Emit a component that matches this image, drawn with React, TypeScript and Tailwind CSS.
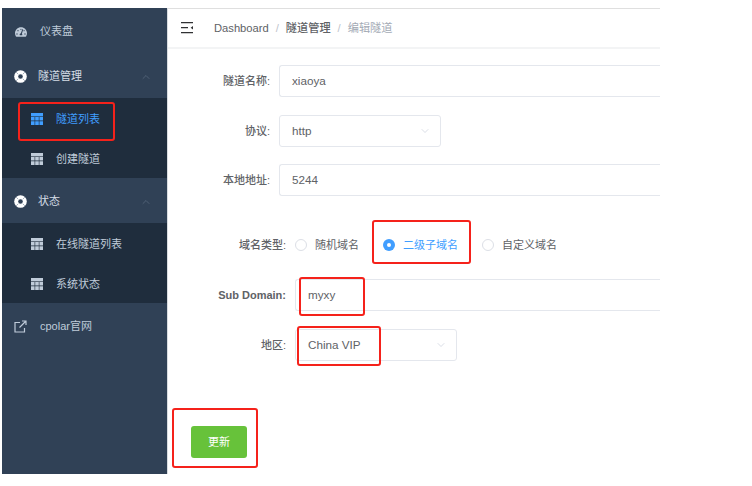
import React from 'react';
import { ChevronDown, ChevronUp } from 'lucide-react';
import { FaTachometerAlt } from 'react-icons/fa';

const FONT = "font-['Liberation_Sans','Noto_Sans_CJK_SC',sans-serif]";

function RingIcon() {
  return (
    <svg width="13" height="13" viewBox="0 0 13 13" className="shrink-0">
      <circle cx="6.5" cy="6.5" r="6.3" fill="#ffffff" />
      <circle cx="6.5" cy="6.5" r="2.3" fill="#304156" />
      <path d="M2.2 2.2l2 2M10.8 2.2l-2 2M2.2 10.8l2-2M10.8 10.8l-2-2" stroke="#9aa6b4" strokeWidth="0.9" />
    </svg>
  );
}

function OutIcon() {
  return (
    <svg width="13" height="13" viewBox="0 0 13 13" fill="none" stroke="#bfcbd9" strokeWidth="1.2" className="shrink-0">
      <path d="M6 2.5H1v9.5h9.5V8" />
      <path d="M5.5 7.5L11.5 1.5M8 1h4v4" />
    </svg>
  );
}

function TableIcon() {
  return (
    <svg width="12" height="12" viewBox="0 0 12 12" fill="currentColor" className="shrink-0">
      <path d="M0 0h12v3.4H0z" />
      <path d="M0 4h3.6v3.6H0zM4.2 4h3.6v3.6H4.2zM8.4 4H12v3.6H8.4zM0 8.2h3.6V12H0zM4.2 8.2h3.6V12H4.2zM8.4 8.2H12V12H8.4z" />
    </svg>
  );
}

function MenuHead({ icon, label, open, bold }: { icon: React.ReactNode; label: string; open?: boolean; bold?: boolean }) {
  return (
    <div className="h-[45px] flex items-center pt-[2px] pl-[12px] pr-[15px] text-[11px] text-[#bfcbd9]">
      <span className="w-[13px] flex justify-center">{icon}</span>
      <span className={bold ? 'ml-[11px] text-[#d5dde6]' : 'ml-[13px]'}>{label}</span>
      {open && <ChevronUp size={12} strokeWidth={1} className="ml-auto text-[#6f7f92]" />}
    </div>
  );
}

function SubItem({ label, active }: { label: string; active?: boolean }) {
  return (
    <div className={`h-10 flex items-center pt-[2px] pl-[29px] text-[11px] ${active ? 'text-[#409eff]' : 'text-[#bfcbd9]'}`}>
      <TableIcon />
      <span className="ml-[13px]">{label}</span>
    </div>
  );
}

function Label({ text, wide, bold }: { text: string; wide?: boolean; bold?: boolean }) {
  return (
    <label className={`shrink-0 pr-[9px] text-right text-[11px] text-[#606266] ${wide ? 'w-[127px]' : 'w-[111px]'} ${bold ? 'font-bold' : 'font-medium'}`}>
      {text}
    </label>
  );
}

function Field({ value }: { value: string }) {
  return (
    <div className="h-8 flex-1 flex items-center pl-[12px] border border-r-0 border-[#e4e7ed] rounded-l-[3px] text-[11.7px] text-[#606266]">
      {value}
    </div>
  );
}

function Select({ value }: { value: string }) {
  return (
    <div className="h-8 w-[162px] flex items-center justify-between pl-[12px] pr-[9px] border border-[#e4e7ed] rounded-[3px] text-[11.7px] text-[#606266]">
      {value}
      <ChevronDown size={12} strokeWidth={1} className="text-[#b4bccc]" />
    </div>
  );
}

function Radio({ label, checked }: { label: string; checked?: boolean }) {
  return (
    <div className={`flex items-center text-[11px] ${checked ? 'text-[#409eff]' : 'text-[#606266]'}`}>
      {checked ? (
        <span className="w-3 h-3 rounded-full bg-[#409eff] flex items-center justify-center">
          <span className="w-1 h-1 rounded-full bg-white" />
        </span>
      ) : (
        <span className="w-3 h-3 rounded-full border border-[#dcdfe6] bg-white" />
      )}
      <span className="ml-[8px]">{label}</span>
    </div>
  );
}

export default function App() {
  return (
    <div className={`relative w-[752px] h-[486px] bg-white overflow-hidden pt-2 pl-[2px] ${FONT}`}>
      <div className="flex h-[466px] w-[658px]">
        <aside className="w-[165px] shrink-0 bg-[#304156]">
          <MenuHead icon={<FaTachometerAlt size={12} color="#bfcbd9" />} label="仪表盘" />
          <MenuHead icon={<RingIcon />} label="隧道管理" open bold />
          <div className="bg-[#1f2d3d]">
            <SubItem label="隧道列表" active />
            <SubItem label="创建隧道" />
          </div>
          <MenuHead icon={<RingIcon />} label="状态" open bold />
          <div className="bg-[#1f2d3d]">
            <SubItem label="在线隧道列表" />
            <SubItem label="系统状态" />
          </div>
          <MenuHead icon={<OutIcon />} label="cpolar官网" />
        </aside>

        <main className="flex-1 min-w-0 border-l border-t border-l-[#d8dce0] border-t-[#dfdfdf]">
          <header className="h-[40px] flex items-center border-b-2 border-[#f3f4f5]">
            <svg width="14" height="12" viewBox="0 0 14 12" className="ml-[12px] shrink-0" fill="#303133">
              <path d="M1 0h12v1.3H1zM1 5h7v1.3H1zM1 10h12v1.3H1z" />
              <path d="M13 4v3.5L10.6 5.8z" />
            </svg>
            <nav className="ml-[20px] flex items-center text-[11.2px] text-[#606266]">
              <span>Dashboard</span>
              <span className="mx-[7px] text-[#c0c4cc]">/</span>
              <span className="font-medium">隧道管理</span>
              <span className="mx-[7px] text-[#c0c4cc]">/</span>
              <span className="text-[#a3aab5]">编辑隧道</span>
            </nav>
          </header>

          <form className="pt-[16px]">
            <div className="flex items-center">
              <Label text="隧道名称:" />
              <Field value="xiaoya" />
            </div>
            <div className="flex items-center mt-[18px]">
              <Label text="协议:" />
              <Select value="http" />
            </div>
            <div className="flex items-center mt-[17px]">
              <Label text="本地地址:" />
              <Field value="5244" />
            </div>

            <div className="flex items-center mt-[32px] h-[34px]">
              <Label text="域名类型:" wide />
              <div className="flex items-center">
                <Radio label="随机域名" />
                <span className="w-[24px]" />
                <Radio checked label="二级子域名" />
                <span className="w-[24px]" />
                <Radio label="自定义域名" />
              </div>
            </div>

            <div className="flex items-center mt-[17px]">
              <Label text="Sub Domain:" wide bold />
              <Field value="myxy" />
            </div>
            <div className="flex items-center mt-[18px]">
              <Label text="地区:" wide />
              <Select value="China VIP" />
            </div>

            <button type="button" className="block ml-[23px] mt-[65px] w-[56px] h-8 rounded-[3px] bg-[#67c23a] text-white text-[11px]">
              更新
            </button>
          </form>
        </main>
      </div>

      <div className="absolute left-[18px] top-[102px] w-[97px] h-[39px] border-2 border-[#f5221b] rounded-[3px]" />
      <div className="absolute left-[372px] top-[220px] w-[99px] h-[44px] border-2 border-[#f5221b] rounded-[3px]" />
      <div className="absolute left-[299px] top-[277px] w-[66px] h-[39px] border-2 border-[#f5221b] rounded-[3px]" />
      <div className="absolute left-[297px] top-[326px] w-[84px] h-[40px] border-2 border-[#f5221b] rounded-[3px]" />
      <div className="absolute left-[172px] top-[408px] w-[86px] h-[60px] border-2 border-[#f5221b] rounded-[3px]" />
    </div>
  );
}
